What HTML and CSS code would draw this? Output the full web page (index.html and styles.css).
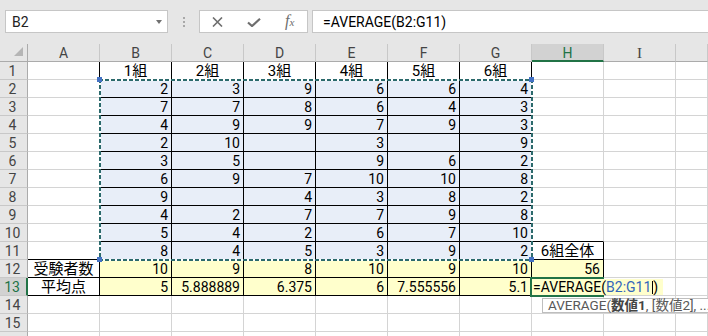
FILE: index.html
```html
<!DOCTYPE html>
<html lang="ja">
<head>
  <meta charset="UTF-8">
  <title>平均点</title>
  <link rel="stylesheet" href="styles.css">
</head>
<body>
  <div class="toolbar">
    <div class="namebox"><span>B2</span><span class="drop"></span></div>
    <div class="grip"><i></i><i></i><i></i></div>
    <div class="fbtns">
      <svg class="cancel" width="11" height="10" viewBox="0 0 11 10"><path d="M1 0.5 L10 9.5 M10 0.5 L1 9.5" stroke="#6e6e6e" stroke-width="1.6" fill="none"/></svg>
      <svg class="enter" width="14" height="9" viewBox="0 0 14 9"><path d="M1 4.5 L5 8 L13 0.8" stroke="#6e6e6e" stroke-width="2.2" fill="none"/></svg>
      <span class="fx">f<small>x</small></span>
    </div>
    <div class="formula">=AVERAGE(B2:G11)</div>
  </div>

  <div class="sheet" id="sheet">
    <div class="ants">
      <i class="hdl tl"></i><i class="hdl tr"></i><i class="hdl bl"></i><i class="hdl br"></i>
    </div>
    <div class="cursor"></div>
    <div class="edit">=AVERAGE(<span class="ref">B2:G11</span><span class="caret"></span>)</div>
    <div class="tip">AVERAGE(<b>数値1</b>, [数値2], ...)</div>
  </div>

  <script>
    const rows = [
      ['', '1組', '2組', '3組', '4組', '5組', '6組'],
      ['', '2', '3', '9', '6', '6', '4'],
      ['', '7', '7', '8', '6', '4', '3'],
      ['', '4', '9', '9', '7', '9', '3'],
      ['', '2', '10', '', '3', '', '9'],
      ['', '3', '5', '', '9', '6', '2'],
      ['', '6', '9', '7', '10', '10', '8'],
      ['', '9', '', '4', '3', '8', '2'],
      ['', '4', '2', '7', '7', '9', '8'],
      ['', '5', '4', '2', '6', '7', '10'],
      ['', '8', '4', '5', '3', '9', '2', '6組全体'],
      ['受験者数', '10', '9', '8', '10', '9', '10', '56'],
      ['平均点', '5', '5.888889', '6.375', '6', '7.555556', '5.1', '']
    ];
    const letters = ['A', 'B', 'C', 'D', 'E', 'F', 'G', 'H', 'I', ''];
    const sheet = document.getElementById('sheet');

    // cells with a black frame
    function boxed(r, c) {
      if (r >= 1 && r <= 13 && c >= 1 && c <= 6) return true;
      if ((r === 12 || r === 13) && c === 0) return true;
      if (r >= 11 && r <= 13 && c === 7) return true;
      return false;
    }

    function add(cls, text) {
      const d = document.createElement('div');
      d.className = cls;
      d.textContent = text;
      sheet.appendChild(d);
      return d;
    }

    add('hd corner', '').innerHTML = '<svg width="10" height="10" viewBox="0 0 10 10"><path d="M9 0 L9 9 L0 9 Z" fill="#b5b5b5"/></svg>';
    letters.forEach((l, i) => add('hd col' + (i === 7 ? ' on' : '') + (l === 'I' ? ' ser' : ''), l));

    for (let r = 1; r <= 16; r++) {
      // row 16 only peeks in at the bottom edge
      add('hd row' + (r === 13 ? ' on' : ''), r < 16 ? r : '');
      for (let c = 0; c < 10; c++) {
        const v = (rows[r - 1] || [])[c] || '';
        let cls = 'c';
        if (v) cls += /^[\d.]+$/.test(v) ? ' num' : ' txt';
        if (r >= 2 && r <= 11 && c >= 1 && c <= 6) cls += ' blue';
        if (r >= 12 && r <= 13 && c >= 1 && c <= 7) cls += ' yel';
        if (boxed(r, c) || boxed(r, c + 1)) cls += ' br';
        if (boxed(r, c) || boxed(r + 1, c)) cls += ' bb';
        add(cls, v);
      }
    }
  </script>
</body>
</html>
```

FILE: styles.css
```css
html, body { margin: 0; }
body { width: 708px; height: 336px; overflow: hidden; background: #fff; font-family: Roboto, "Noto Sans CJK JP", sans-serif; font-size: 14px; color: #000; }

.toolbar { height: 44px; box-sizing: border-box; padding-top: 10px; background: #e6e6e6; display: flex; align-items: flex-start; }
.namebox { margin-left: 5px; width: 163px; height: 23px; box-sizing: border-box; border: 1px solid #c6c6c6; background: #fff; padding: 1px 5px 0 6px; line-height: 20px; color: #222; display: flex; align-items: center; justify-content: space-between; }
.drop { width: 0; height: 0; border-left: 3px solid transparent; border-right: 3px solid transparent; border-top: 4px solid #707070; }
.grip { width: 31px; height: 23px; display: flex; flex-direction: column; align-items: center; justify-content: center; gap: 2px; }
.grip i { width: 2px; height: 2px; background: #a8a8a8; }
.fbtns { width: 109px; height: 23px; box-sizing: border-box; border: 1px solid #c6c6c6; background: #fff; display: flex; align-items: center; padding-left: 12px; }
.enter { margin-left: 24px; margin-top: 2px; }
.fx { margin-left: 24px; font-family: "Liberation Serif", serif; font-style: italic; font-size: 16px; color: #6e6e6e; line-height: 20px; }
.fx small { font-size: 11px; }
.formula { flex: 1; margin: 0 -10px 0 4px; height: 23px; box-sizing: border-box; border: 1px solid #c6c6c6; background: #fff; padding: 1px 0 0 10px; line-height: 20px; }

.sheet { position: relative; display: grid; grid-template-columns: 28px repeat(9, 72px) 32px; grid-template-rows: repeat(17, 18px); height: 292px; }
.hd { background: #e6e6e6; color: #444; box-sizing: border-box; text-align: center; line-height: 17px; padding-top: 1px; }
.col { border-right: 1px solid #c8c8c8; border-bottom: 1px solid #ababab; }
.row { border-right: 1px solid #ababab; border-bottom: 1px solid #c8c8c8; padding: 2px 2px 0 0; line-height: 15px; }
.corner { border-right: 1px solid #ababab; border-bottom: 1px solid #ababab; display: flex; align-items: flex-end; justify-content: flex-end; padding: 0 3px 4px 0; }
.hd.on { background: #d2d2d2; color: #217346; }
.col.on { border-bottom: 2px solid #217346; }
.row.on { border-right: 2px solid #217346; }
.ser { font-family: "Liberation Serif", serif; font-size: 15px; }

.c { box-sizing: border-box; border-right: 1px solid #d4d4d4; border-bottom: 1px solid #d4d4d4; line-height: 15px; padding: 2px 3px 0; white-space: nowrap; }
.num { text-align: right; }
.txt { text-align: center; font-size: 15px; padding-top: 1px; line-height: 16px; }
.blue { background: #e8eef8; }
.yel { background: #ffffcc; }
.c.br { border-right-color: #000; }
.c.bb { border-bottom-color: #000; }

.ants { position: absolute; left: 99px; top: 35px; width: 434px; height: 182px;
  background:
    repeating-linear-gradient(90deg, #2c6a6c 0 4px, #fff 4px 6px) left top / 100% 2px no-repeat,
    repeating-linear-gradient(90deg, #2c6a6c 0 4px, #fff 4px 6px) left bottom / 100% 2px no-repeat,
    repeating-linear-gradient(180deg, #2c6a6c 0 4px, #fff 4px 6px) left top / 2px 100% no-repeat,
    repeating-linear-gradient(180deg, #2c6a6c 0 4px, #fff 4px 6px) right top / 2px 100% no-repeat; }
.hdl { position: absolute; width: 5px; height: 5px; background: #4472c4; }
.tl { left: -2px; top: -2px; }
.tr { left: 430px; top: -2px; }
.bl { left: -2px; top: 178px; }
.br { left: 430px; top: 178px; }

.cursor { position: absolute; left: 530px; top: 233px; width: 74px; height: 20px; box-sizing: border-box; border: 2px solid #217346; }
.edit { position: absolute; left: 533px; top: 235px; width: 130px; height: 16px; box-sizing: border-box; padding-top: 1px; background: #ffffcc; line-height: 15px; white-space: nowrap; }
.ref { color: #3366bb; }
.caret { display: inline-block; width: 1px; height: 13px; background: #000; vertical-align: -2px; margin-left: 1px; }
.tip { position: absolute; left: 542px; top: 254px; height: 15px; box-sizing: border-box; border: 1px solid #bebebe; background: #fff; padding: 0 5px; font-size: 13.5px; line-height: 13px; color: #595959; white-space: nowrap; }
.tip b { color: #444; }
```
